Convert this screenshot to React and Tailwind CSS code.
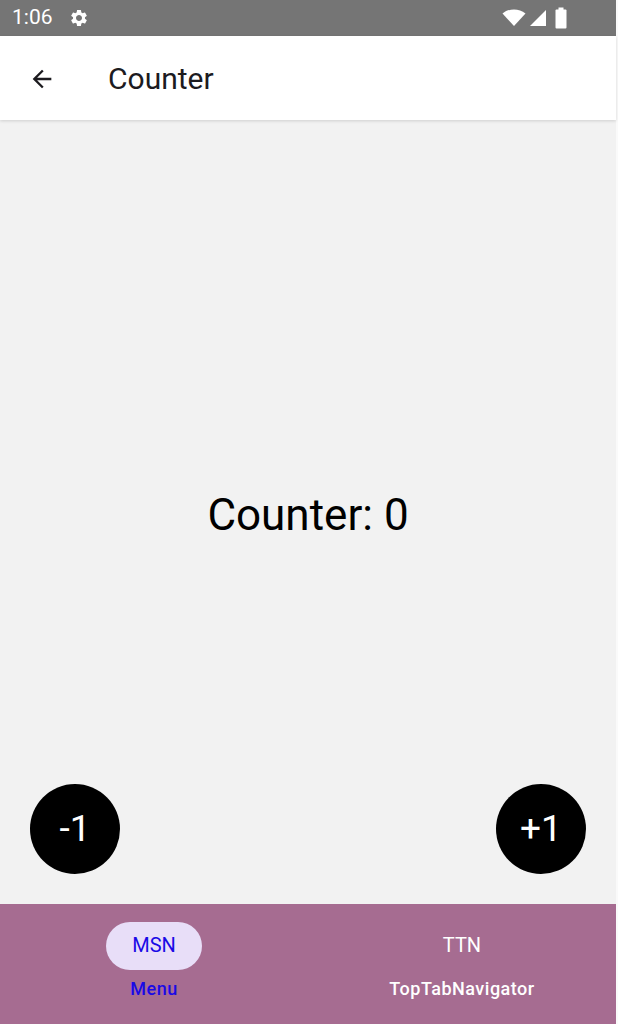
import React, { useState } from 'react';

const Gear = () => (
  <svg width="20" height="20" viewBox="0 0 24 24" fill="white">
    <path d="M19.14 12.94c.04-.3.06-.61.06-.94 0-.32-.02-.64-.07-.94l2.03-1.58a.49.49 0 0 0 .12-.61l-1.92-3.32a.488.488 0 0 0-.59-.22l-2.39.96c-.5-.38-1.03-.7-1.62-.94l-.36-2.54a.484.484 0 0 0-.48-.41h-3.84c-.24 0-.43.17-.47.41l-.36 2.54c-.59.24-1.13.57-1.62.94l-2.39-.96c-.22-.08-.47 0-.59.22L2.74 8.87c-.12.21-.08.47.12.61l2.03 1.58c-.05.3-.09.63-.09.94s.02.64.07.94l-2.03 1.58a.49.49 0 0 0-.12.61l1.92 3.32c.12.22.37.29.59.22l2.39-.96c.5.38 1.03.7 1.62.94l.36 2.54c.05.24.24.41.48.41h3.84c.24 0 .44-.17.47-.41l.36-2.54c.59-.24 1.13-.56 1.62-.94l2.39.96c.22.08.47 0 .59-.22l1.92-3.32c.12-.22.07-.47-.12-.61l-2.01-1.58zM12 15.6c-1.98 0-3.6-1.62-3.6-3.6s1.62-3.6 3.6-3.6 3.6 1.62 3.6 3.6-1.62 3.6-3.6 3.6z" />
  </svg>
);

const StatusBar = () => (
  <div className="h-[36px] bg-[#757575] flex items-center px-3 text-white">
    <span className="text-[21px]">1:06</span>
    <span className="ml-[16px] flex items-center"><Gear /></span>
    <div className="ml-auto flex items-center gap-[2px] mr-[36px]">
      {/* wifi */}
      <svg width="24" height="20" viewBox="0 0 24 20" fill="white">
        <path d="M12 18 L0.5 5.5 C7 0 17 0 23.5 5.5 Z" />
      </svg>
      {/* signal */}
      <svg width="20" height="20" viewBox="0 0 20 20" fill="white">
        <path d="M18 2 L18 18 L2 18 Z" />
      </svg>
      {/* battery */}
      <svg width="14" height="22" viewBox="0 0 14 22" fill="white" className="ml-[4px]">
        <rect x="4.5" y="0.5" width="5" height="3" />
        <rect x="1.5" y="2.5" width="11" height="19" rx="1" />
      </svg>
    </div>
  </div>
);

const Header = () => (
  <div className="h-[84px] bg-white flex items-center pt-[1px] shadow-[0_1px_3px_rgba(0,0,0,0.15)] relative z-10">
    <svg width="28" height="28" viewBox="0 0 24 24" className="ml-[28px]" fill="#1c1b1f">
      <path d="M20 11H7.83l5.59-5.59L12 4l-8 8 8 8 1.41-1.41L7.83 13H20v-2z" />
    </svg>
    <span className="ml-[52px] text-[30px] text-[#1c1b1f]">Counter</span>
  </div>
);

const RoundButton = ({ label, onClick }) => (
  <button
    onClick={onClick}
    className="w-[90px] h-[90px] rounded-full bg-black text-white text-[37px] flex items-center justify-center"
  >
    {label}
  </button>
);

export default function App() {
  const [count, setCount] = useState(0);

  return (
    <div className="w-[618px] h-[1024px] bg-[#fafafa] font-['Roboto',sans-serif]">
      <div className="w-[616px] h-full flex flex-col">
        <StatusBar />
        <Header />

        {/* screen body */}
        <div className="flex-1 bg-[#f2f2f2] relative flex items-center justify-center pt-[6px]">
          <span className="text-[44px] text-black">Counter: {count}</span>
          {/* floating buttons */}
          <div className="absolute left-[30px] bottom-[30px]">
            <RoundButton label="-1" onClick={() => setCount(count - 1)} />
          </div>
          <div className="absolute right-[30px] bottom-[30px]">
            <RoundButton label="+1" onClick={() => setCount(count + 1)} />
          </div>
        </div>

        {/* bottom navigation */}
        <div className="h-[120px] bg-[#a66c91] grid grid-cols-2">
          <div className="flex flex-col items-center pt-[18px]">
            <div className="w-[96px] h-[48px] rounded-full bg-[#e8def8] flex items-center justify-center pb-[2px] text-[20px] text-[#1a0ae6]">
              MSN
            </div>
            <span className="mt-[5px] text-[18px] font-medium tracking-[0.5px] text-[#1a0ae6]">Menu</span>
          </div>
          <div className="flex flex-col items-center pt-[18px]">
            <div className="w-[96px] h-[48px] flex items-center justify-center pb-[2px] text-[20px] text-white">
              TTN
            </div>
            <span className="mt-[5px] text-[18px] font-medium tracking-[0.5px] text-white">TopTabNavigator</span>
          </div>
        </div>
      </div>
    </div>
  );
}
